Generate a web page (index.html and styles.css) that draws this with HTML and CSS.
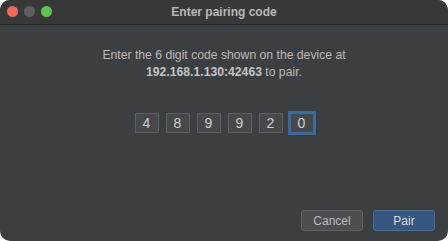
FILE: index.html
```html
<!DOCTYPE html>
<html>
<head>
<meta charset="utf-8">
<link rel="stylesheet" href="styles.css">
</head>
<body>
<div class="window">
  <div class="titlebar">
    <div class="lights">
      <span class="light red"></span>
      <span class="light grey"></span>
      <span class="light green"></span>
    </div>
    <div class="title">Enter pairing code</div>
  </div>
  <div class="content">
    <p class="message">Enter the 6 digit code shown on the device at<br><b>192.168.1.130:42463</b> to pair.</p>
    <div class="code">
      <span class="digit">4</span>
      <span class="digit">8</span>
      <span class="digit">9</span>
      <span class="digit">9</span>
      <span class="digit">2</span>
      <span class="digit focus">0</span>
    </div>
    <div class="buttons">
      <button class="btn cancel">Cancel</button>
      <button class="btn primary">Pair</button>
    </div>
  </div>
</div>
</body>
</html>
```
FILE: styles.css
```css
html, body {
  margin: 0;
  padding: 0;
  background: #ffffff;
}
body {
  width: 448px;
  height: 241px;
  font-family: "Liberation Sans", Arial, sans-serif;
}
.window {
  width: 448px;
  height: 241px;
  border-radius: 10px;
  overflow: hidden;
  background: #3c3f41;
  display: flex;
  flex-direction: column;
}
.titlebar {
  height: 24px;
  flex: none;
  background: #383838;
  border-bottom: 1px solid #262626;
  position: relative;
  display: flex;
  align-items: center;
  justify-content: center;
}
.lights {
  position: absolute;
  left: 7px;
  top: 6px;
  display: flex;
  gap: 6px;
}
.light {
  width: 11px;
  height: 11px;
  border-radius: 50%;
  display: block;
}
.red { background: #ec6a5e; }
.grey { background: #5f5f5f; }
.green { background: #5fc454; }
.title {
  color: #b8b8b8;
  font-size: 12px;
  font-weight: bold;
}
.content {
  flex: 1;
  display: flex;
  flex-direction: column;
  align-items: center;
}
.message {
  margin: 22px 0 0;
  color: #bbbbbb;
  font-size: 12.2px;
  line-height: 17px;
  text-align: center;
}
.message b {
  color: #c4c4c4;
}
.code {
  margin-top: 32px;
  display: flex;
  gap: 7px;
}
.digit {
  width: 22px;
  height: 18px;
  border: 1px solid #5c6062;
  background: #45494a;
  color: #cfcfcf;
  font-size: 14px;
  line-height: 18px;
  text-align: center;
}
.digit.focus {
  border-color: #3d6b98;
  outline: 2px solid #3d6b98;
}
.buttons {
  margin-top: auto;
  margin-bottom: 10px;
  align-self: flex-end;
  margin-right: 13px;
  display: flex;
  gap: 10px;
}
.btn {
  width: 62px;
  height: 21px;
  border-radius: 3px;
  font-family: "Liberation Sans", Arial, sans-serif;
  font-size: 12px;
  padding: 0;
}
.cancel {
  background: #4b4f51;
  border: 1px solid #5d6163;
  color: #bbbbbb;
}
.primary {
  background: #365880;
  border: 1px solid #4a6e98;
  color: #dddddd;
}
```
